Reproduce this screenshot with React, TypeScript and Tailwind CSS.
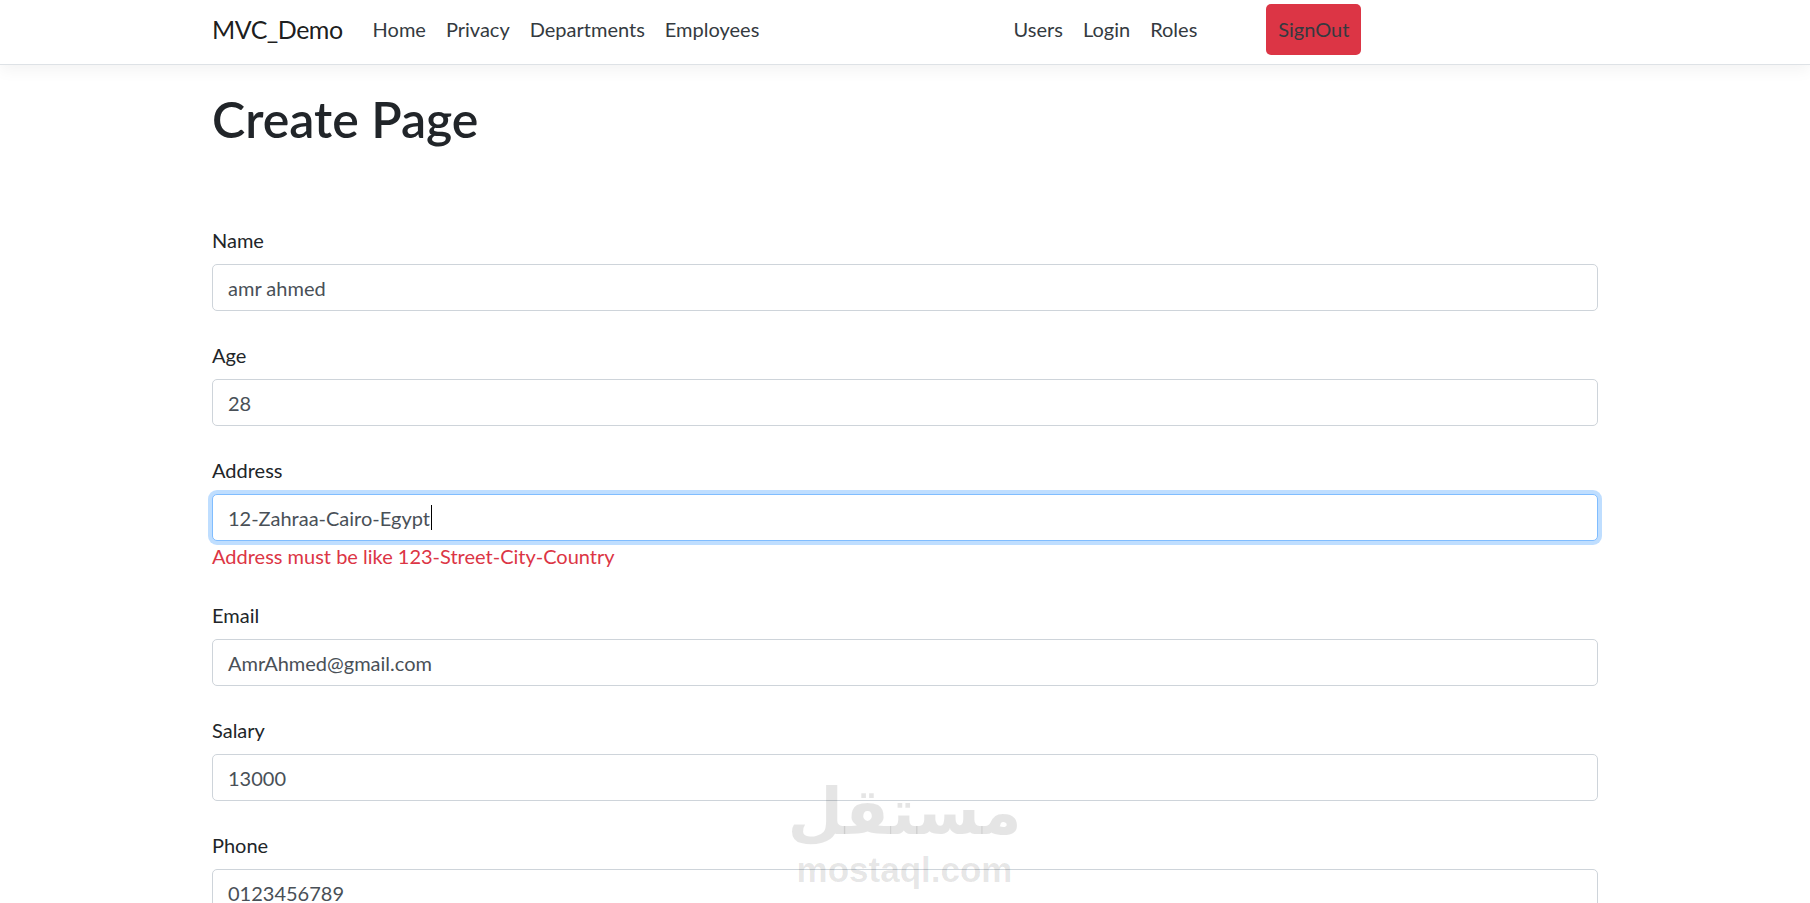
import React from 'react';

type Field = {
  label: string;
  value: string;
  focused?: boolean;
  error?: string;
};

const fields: Field[] = [
  { label: 'Name', value: 'amr ahmed' },
  { label: 'Age', value: '28' },
  {
    label: 'Address',
    value: '12-Zahraa-Cairo-Egypt',
    focused: true,
    error: 'Address must be like 123-Street-City-Country',
  },
  { label: 'Email', value: 'AmrAhmed@gmail.com' },
  { label: 'Salary', value: '13000' },
  { label: 'Phone', value: '0123456789' },
];

const leftLinks = ['Home', 'Privacy', 'Departments', 'Employees'];
const rightLinks = ['Users', 'Login', 'Roles'];

function FormGroup({ field }: { field: Field }) {
  return (
    <div className="flex flex-col mb-[29px]">
      <label className="text-[20px] leading-[30px] mb-[9px] text-[#212529]">{field.label}</label>
      <div
        className={
          field.focused
            ? 'h-[47px] flex items-center px-[15px] rounded-[5px] border border-[#80bdff] shadow-[0_0_0_4px_rgba(0,123,255,0.25)] bg-white'
            : 'h-[47px] flex items-center px-[15px] rounded-[5px] border border-[#ced4da] bg-white'
        }
      >
        <span className="text-[20px] leading-[30px] text-[#495057]">{field.value}</span>
        {field.focused && <span className="w-px h-[25px] bg-black ml-px" />}
      </div>
      {field.error && (
        <span className="text-[20px] leading-[30px] text-[#dc3545]">{field.error}</span>
      )}
    </div>
  );
}

export default function App() {
  return (
    <div className="relative h-[903px] overflow-hidden bg-white font-['Lato','Open_Sans',sans-serif] text-[#212529]">
      {/* navbar */}
      <header className="relative z-10 h-[65px] border-b border-[#dee2e6] bg-white shadow-[0_5px_15px_rgba(0,0,0,0.05)]">
        <div className="w-[1386px] mx-auto h-[58px] flex items-center">
          <a className="text-[25px] leading-[37px] mr-[20px] tracking-[-0.5px] text-black/90">MVC_Demo</a>
          <ul className="flex w-[641px]">
            {leftLinks.map((l) => (
              <li key={l}>
                <a className="px-[10px] text-[20px] leading-[30px] text-[#343a40]">{l}</a>
              </li>
            ))}
          </ul>
          <ul className="flex items-center">
            {rightLinks.map((l) => (
              <li key={l}>
                <a className="px-[10px] text-[20px] leading-[30px] text-[#343a40]">{l}</a>
              </li>
            ))}
            <li className="ml-[59px]">
              <button className="h-[51px] px-[12px] rounded-[5px] bg-[#dc3545] text-[20px] leading-[30px] text-[#343a40]">
                SignOut
              </button>
            </li>
          </ul>
        </div>
      </header>

      <main className="w-[1386px] mx-auto">
        <h1 className="mt-[24px] text-[50px] leading-[60px] font-semibold text-[#212529]">Create Page</h1>
        <form className="mt-[76px]">
          {fields.map((f) => (
            <FormGroup key={f.label} field={f} />
          ))}
        </form>
      </main>

      {/* watermark */}
      <div className="absolute left-[796px] top-[772px] w-[217px] flex flex-col items-center pointer-events-none select-none text-black/10">
        <span className="font-['DejaVu_Sans',sans-serif] font-bold text-[64px] leading-[80px]" dir="rtl">
          مستقل
        </span>
        <span className="font-['Liberation_Sans',sans-serif] font-bold text-[35px] leading-[36px]">mostaql.com</span>
      </div>
    </div>
  );
}
